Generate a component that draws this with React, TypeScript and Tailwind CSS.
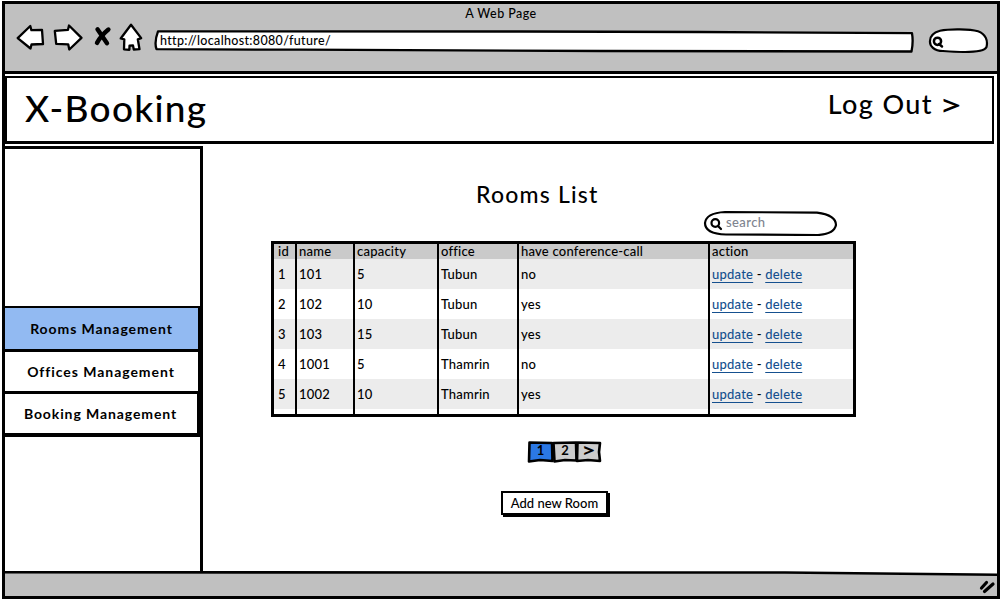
import React from "react";

type Room = { id: number; name: string; capacity: number; office: string; conference: string };

const rooms: Room[] = [
  { id: 1, name: "101", capacity: 5, office: "Tubun", conference: "no" },
  { id: 2, name: "102", capacity: 10, office: "Tubun", conference: "yes" },
  { id: 3, name: "103", capacity: 15, office: "Tubun", conference: "yes" },
  { id: 4, name: "1001", capacity: 5, office: "Thamrin", conference: "no" },
  { id: 5, name: "1002", capacity: 10, office: "Thamrin", conference: "yes" },
];

const columns = "grid grid-cols-[23px_58px_84px_80px_191px_1fr]";

function Toolbar() {
  return (
    <svg className="mt-[18px] ml-[9px] h-[31px] w-[130px] shrink-0" viewBox="14 21.5 130 31" stroke="#000" strokeWidth="2.3" strokeLinejoin="round" strokeLinecap="round" fill="#fff">
      <path d="M17.7 37.6 L30.3 25.5 L31.4 29.7 L42 29.4 L43 43.5 L31.5 44 L30.5 48 Z" />
      <path d="M54.8 30.4 L68 29.3 L69 25 L81.5 37.4 L69.3 49 L68.2 43.8 L56.2 43.4 Z" />
      <g fill="none" strokeWidth="4.4">
        <path d="M97.5 28.8 L107 42.8" />
        <path d="M108.4 29 Q101 35 97 42.4" />
      </g>
      <path d="M131 24.2 L141.2 37.6 L137.8 38.8 L139.5 48.6 L133.8 49 L133 45 L129.5 45.2 L129.4 49.3 L124 48.8 L124.3 38.8 L120.7 38 Z" />
    </svg>
  );
}

function BrowserBar() {
  return (
    <header className="flex h-[70px] shrink-0 flex-col border-b-[3px] border-black bg-[#c0c0c0]">
      <div className="h-0 text-center text-[12.5px] font-medium tracking-[0.45px]">
        <span className="block pt-[2px] leading-[16px]">A Web Page</span>
      </div>
      <div className="flex">
        <Toolbar />
        <div className="relative mt-[23px] ml-[9px] h-[26px] w-[764px] shrink-0">
          <svg className="absolute inset-0 h-[26px] w-[764px]" viewBox="153 27 764 26" fill="#fff" stroke="#000" strokeWidth="2.3" strokeLinejoin="round">
            <path d="M158 31.3 L520 31.5 L700 32 L912 33.2 Q913.5 42 911.5 51.5 L600 51 L300 49.7 L156.5 49.2 Q154 42 158 31.3 Z" />
          </svg>
          <span className="relative block pt-[6px] pl-[7px] text-[12.5px] leading-[16px] font-medium tracking-[0.33px]">http://localhost:8080/future/</span>
        </div>
        <svg className="mt-[22px] ml-[9px] h-[28px] w-[64px] shrink-0" viewBox="926 26 64 28" fill="#fff" stroke="#000" strokeWidth="2.2" strokeLinecap="round">
          <path d="M940 30.8 C950 28.5 970 29 978 31.2 C986 34 988 41 986.5 47 C984 53 962 52.5 943 51 C934 51 929.5 46 930 41 C930 36 934 32.5 940 30.8 Z" />
          <circle cx="937.5" cy="41.3" r="3.6" strokeWidth="2.5" />
          <path d="M939 44 L942 46.5" strokeWidth="2.5" />
        </svg>
      </div>
    </header>
  );
}

function Sidebar() {
  return (
    <aside className="-ml-[3px] flex h-[425px] w-[201px] shrink-0 flex-col border-x-[3px] border-t-[3px] border-black pt-[157px]">
      <nav className="flex flex-col text-center text-[14px] font-bold">
        <a className="h-[43px] border-t-[2px] border-r-[2px] border-black bg-[#92baf2] pt-[11px] leading-[20px] tracking-[0.92px]">Rooms Management</a>
        <a className="h-[42px] border-t-[3px] border-r-[2px] border-black bg-white pt-[10px] pr-px leading-[20px] tracking-[0.95px]">Offices Management</a>
        <a className="h-[46px] border-t-[3px] border-r-[3px] border-b-[4px] border-black bg-white pt-[10px] pr-px leading-[20px] tracking-[0.9px]">Booking Management</a>
      </nav>
    </aside>
  );
}

function RoomsTable() {
  return (
    <div className="ml-[68px] w-[585px] border-[3px] border-black text-[13px] font-medium tracking-[0.22px]">
      <div className={columns + " bg-[#cacaca] leading-[15px] [&>*]:h-[15px] [&>*]:border-black [&>*]:pl-[2px] [&>*:first-child]:pl-[4px] [&>*:not(:last-child)]:border-r-[2px]"}>
        <span>id</span>
        <span>name</span>
        <span>capacity</span>
        <span>office</span>
        <span>have conference-call</span>
        <span>action</span>
      </div>
      {rooms.map((r) => (
        <div key={r.id} className={columns + " leading-[30px] odd:bg-white even:bg-[#ececec] [&>*]:h-[30px] [&>*]:border-black [&>*]:pl-[2px] [&>*:first-child]:pl-[4px] [&>*:not(:last-child)]:border-r-[2px]"}>
          <span>{r.id}</span>
          <span>{r.name}</span>
          <span>{r.capacity}</span>
          <span>{r.office}</span>
          <span>{r.conference}</span>
          <span>
            <a className="text-[#15508f] underline underline-offset-[3px]">update</a>
            {" - "}
            <a className="text-[#15508f] underline underline-offset-[3px]">delete</a>
          </span>
        </div>
      ))}
      <div className={columns + " [&>*]:h-[5px] [&>*]:border-black [&>*:not(:last-child)]:border-r-[2px]"}>
        <span /><span /><span /><span /><span /><span />
      </div>
    </div>
  );
}

function Pagination() {
  return (
    <div className="relative mt-[23px] ml-[324px] flex h-[24px] w-[75px] text-center text-[13px] leading-[20px] font-bold">
      <svg className="absolute inset-0 h-[24px] w-[75px]" viewBox="527 440 75 24" stroke="#000" strokeWidth="2.6" strokeLinejoin="round">
        <path fill="#2b78e4" d="M529.5 442.5 L552 443 L552.5 461 L540 460 L529 461.5 Z" />
        <path fill="#cccccc" d="M553.5 443 L576 442.5 L576.5 460.5 L565 460 L554.5 461.5 Z" />
        <path fill="#cccccc" d="M577.5 442.5 L600 443 L599 452 L600 461 L588 460 L577 461 Z" />
      </svg>
      <span className="relative w-[27px]">1</span>
      <span className="relative w-[22px]">2</span>
      <span className="relative w-[25px] scale-x-[1.35] text-[18px] leading-[20px]">&gt;</span>
    </div>
  );
}

export default function App() {
  return (
    <div className="h-[600px] w-[1001px] overflow-hidden bg-white pt-px pr-px pb-px pl-[2px] font-['Lato',sans-serif] text-black [font-variant-ligatures:none]">
      <div className="flex h-[598px] flex-col border-[3px] border-black">
        <BrowserBar />
        <section className="mt-[2px] flex h-[68px] w-[989px] shrink-0 justify-between border-x-[2px] border-t-[2px] border-b-[3px] border-black font-medium">
          <h1 className="pt-[7px] pl-[18px] text-[37px] leading-[46px] tracking-[1.25px]">X-Booking</h1>
          <a className="flex gap-[6px] pt-[8px] pr-[33px] text-[27px] leading-[36px] tracking-[1.4px]">
            <span>Log Out</span>
            <span className="w-[20px] origin-left scale-x-[1.35] text-[30px] tracking-normal">&gt;</span>
          </a>
        </section>
        <div className="mt-[2px] flex h-[425px] shrink-0">
          <Sidebar />
          <main className="flex flex-col">
            <h2 className="pt-[34px] pl-[273px] text-[23px] leading-[28px] font-medium tracking-[1.2px]">Rooms List</h2>
            <div className="relative mt-[2px] ml-[500px] h-[26px] w-[136px]">
              <svg className="absolute inset-0 h-[26px] w-[136px]" viewBox="703 210 136 26" fill="#fff" stroke="#000" strokeWidth="2.2" strokeLinecap="round">
                <path d="M725 212 L817 212.6 Q836 215 836 225 Q834 234 818 235 L726 234.5 Q705 234 705 223 Q706 213 725 212 Z" />
                <circle cx="715.3" cy="223" r="3.8" />
                <path d="M718.5 226.5 L721 229" />
              </svg>
              <span className="relative block pl-[23px] text-[13px] leading-[24px] font-medium tracking-[0.4px] text-[#7e848f]">search</span>
            </div>
            <div className="mt-[5px]"><RoomsTable /></div>
            <Pagination />
            <button className="mt-[27px] ml-[298px] h-[24px] w-[107px] border-[2px] border-black bg-white text-[13px] leading-[20px] font-medium shadow-[2px_2px_0_#000]">Add new Room</button>
          </main>
        </div>
        <footer className="relative flex flex-1 justify-end bg-[#c0c0c0]">
          <svg className="absolute inset-x-0 top-0 h-[6px] w-full" viewBox="0 0 992 6" preserveAspectRatio="none" stroke="#000" strokeWidth="2.6" fill="#fff">
            <path stroke="none" d="M0 0 H992 V3 L780 1 H0 Z" />
            <path fill="none" d="M0 1.3 L780 1.5 L992 3.8" />
          </svg>
          <svg className="mt-[8px] h-[15px] w-[18px]" viewBox="0 0 18 15" stroke="#000" strokeWidth="3.2" strokeLinecap="round">
            <path d="M2.5 9 L7.5 3.5 M5.5 12.5 L14 5" />
          </svg>
        </footer>
      </div>
    </div>
  );
}
